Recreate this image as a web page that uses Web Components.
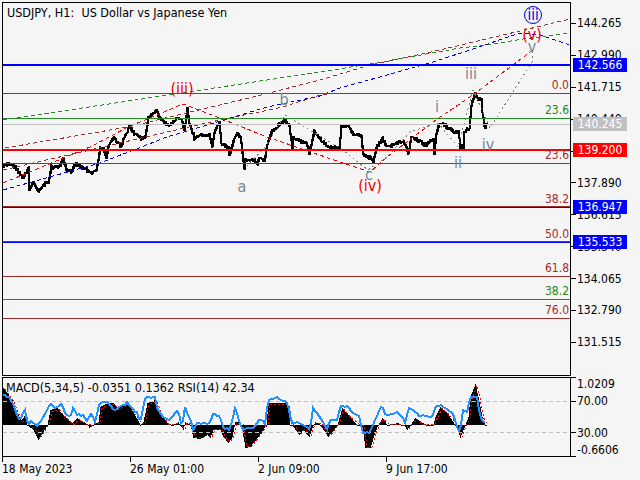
<!DOCTYPE html>
<html><head><meta charset="utf-8"><title>USDJPY</title>
<style>
html,body{margin:0;padding:0;background:#f5f5f5;overflow:hidden}
body{font:12px "DejaVu Sans Condensed","DejaVu Sans",sans-serif;color:#000}
</style></head><body>
<mt-chart>
  <price-pane slot="price" title-text="USDJPY, H1:  US Dollar vs Japanese Yen">
    <chart-label x="182" y="89" c="#f00000">(iii)</chart-label>
    <chart-label x="284" y="100" c="#778899">b</chart-label>
    <chart-label x="242" y="187" c="#778899">a</chart-label>
    <chart-label x="369" y="175" c="#778899">c</chart-label>
    <chart-label x="370" y="186" c="#f00000">(iv)</chart-label>
    <chart-label x="437" y="107" c="#778899">i</chart-label>
    <chart-label x="458" y="163" c="#778899">ii</chart-label>
    <chart-label x="471" y="74" c="#778899">iii</chart-label>
    <chart-label x="488" y="145" c="#778899">iv</chart-label>
    <chart-label x="532" y="35" c="#f00000">(v)</chart-label>
    <chart-label x="532" y="47" c="#778899">v</chart-label>
    <chart-label x="533" y="15" c="#0000e0" ring>iii</chart-label>
    <chart-label r="568" y="85" c="#a52a2a" fib>0.0</chart-label>
    <chart-label r="568" y="110" c="#228b22" fib>23.6</chart-label>
    <chart-label r="568" y="155" c="#a52a2a" fib>23.6</chart-label>
    <chart-label r="568" y="199" c="#a52a2a" fib>38.2</chart-label>
    <chart-label r="568" y="234" c="#a52a2a" fib>50.0</chart-label>
    <chart-label r="568" y="268" c="#a52a2a" fib>61.8</chart-label>
    <chart-label r="568" y="291" c="#228b22" fib>38.2</chart-label>
    <chart-label r="568" y="310" c="#a52a2a" fib>76.0</chart-label>
  </price-pane>
  <price-axis slot="price-axis">
    <axis-tick>144.265</axis-tick><axis-tick>142.990</axis-tick><axis-tick>141.715</axis-tick>
    <axis-tick>140.440</axis-tick><axis-tick>139.165</axis-tick><axis-tick>137.890</axis-tick>
    <axis-tick>136.615</axis-tick><axis-tick>135.340</axis-tick><axis-tick>134.065</axis-tick>
    <axis-tick>132.790</axis-tick><axis-tick>131.515</axis-tick>
    <price-tag slot="tags" y="58" bg="#0000ff">142.566</price-tag>
    <price-tag slot="tags" y="117" bg="#c0c0c0">140.245</price-tag>
    <price-tag slot="tags" y="143" bg="#ff0000">139.200</price-tag>
    <price-tag slot="tags" y="200" bg="#0000ff">136.947</price-tag>
    <price-tag slot="tags" y="235" bg="#0000ff">135.533</price-tag>
  </price-axis>
  <indicator-pane slot="indicator">MACD(5,34,5) -0.0351 0.1362 RSI(14) 42.34</indicator-pane>
  <indicator-axis slot="indicator-axis">
    <span style="height:14px;margin-top:0">1.0209</span>
    <span style="height:14px;margin-top:3px">70.00</span>
    <span style="height:14px;margin-top:18px">30.00</span>
    <span style="height:14px;margin-top:3px">-0.6606</span>
  </indicator-axis>
  <time-axis slot="time">
    <time-tick>18 May 2023</time-tick><time-tick>26 May 01:00</time-tick>
    <time-tick>2 Jun 09:00</time-tick><time-tick>9 Jun 17:00</time-tick>
  </time-axis>
</mt-chart>
<script>
const FONT='"DejaVu Sans Condensed","DejaVu Sans",sans-serif';
const PRICE=[[3,166],[8,163],[13,166],[18,172],[21,178],[25,173],[27,166],[27.5,193],[28,190],[32,182],[37,191],[42,185],[47,182],[50,167],[57,167],[62,160],[65,170],[70,172],[75,163],[80,167],[87,170],[90,173],[95,170],[99,148],[103,150],[105,157],[107,147],[112,138],[117,143],[120,147],[122,140],[128,127],[133,133],[140,138],[144,137],[147,117],[155,110],[158,117],[163,123],[168,125],[175,119],[180,118],[183,130],[186,108],[188,123],[193,138],[200,135],[208,135],[211,147],[213,133],[218,122],[220,143],[227,148],[228,155],[233,138],[236,132],[239,137],[241,152],[243,168],[244,160],[253,160],[256,165],[258,157],[263,162],[266,145],[270,132],[277,125],[283,120],[288,125],[291,148],[292,137],[300,142],[305,143],[308,152],[313,132],[320,140],[327,147],[337,148],[337.5,155],[340,126],[347,126],[353,135],[360,136],[362,155],[370,158],[372,161],[375,148],[381,138],[385,147],[390,146],[398,142],[403,143],[407,153],[410,137],[420,142],[423,145],[432,140],[433,155],[435,133],[438,123],[448,128],[453,132],[457,132],[459,147],[462,147],[463,132],[468,128],[470,105],[474,93],[477,100],[480,98],[481,113],[483,125],[484,127],[486,123]];
const DASH={
 green:[[3,120],[320,72],[370,64],[460,48],[487,45],[523,39],[570,33]],
 brown1:[[5,148],[128,127],[253,97],[320,80],[370,65],[427,53],[520,31],[570,19]],
 brown2:[[3,170],[103,147],[167,132],[220,120],[283,107],[320,95],[335,93]],
 blue:[[3,190],[100,163],[167,137],[267,107],[320,96],[340,88],[387,75],[433,62],[470,50],[520,33],[540,35],[570,45]],
 red:[[3,183],[90,147],[128,127],[183,104],[217,117],[267,137],[337,161],[370,172],[387,157],[433,122],[477,92],[533,50]],
 grey:[[243,170],[265,147],[285,115],[313,132],[340,148],[368,170],[387,157],[410,132],[438,123],[458,147],[473,90],[490,128],[532,62],[533,50]]
};
const RSI=[[3,395],[10,397],[15,410],[20,420],[25,410],[28,427],[30,420],[37,427],[45,413],[50,403],[55,408],[62,403],[65,413],[70,417],[73,408],[77,415],[83,415],[88,422],[90,412],[95,422],[100,402],[107,403],[115,410],[127,403],[137,413],[140,423],[145,398],[155,397],[157,407],[163,417],[170,420],[178,410],[182,427],[185,408],[192,423],[193,430],[197,423],[210,423],[213,413],[220,417],[223,427],[230,430],[235,408],[238,417],[242,430],[253,428],[260,420],[265,423],[268,400],[275,397],[287,402],[292,423],[300,423],[307,427],[310,430],[313,408],[320,417],[327,430],[330,420],[337,420],[340,407],[347,406],[353,413],[360,417],[362,433],[370,432],[375,420],[382,405],[385,415],[397,413],[403,417],[405,423],[409,408],[417,413],[420,417],[425,415],[432,417],[435,408],[440,405],[448,410],[453,413],[456,425],[460,432],[463,410],[467,412],[470,397],[477,397],[480,417],[485,423]];
const HIST=[[3,388],[7,393],[12,400],[17,413],[21,420],[25,415],[27,425],[33,430],[38,440],[43,432],[47,425],[50,410],[57,408],[63,415],[68,420],[72,423],[77,418],[85,423],[88,425],[89,428],[92,425],[98,422],[100,407],[107,403],[113,403],[117,408],[127,403],[133,412],[140,425],[143,422],[147,403],[155,400],[160,413],[167,423],[172,425],[178,422],[183,430],[185,422],[190,425],[193,438],[200,439],[207,435],[210,438],[213,430],[220,430],[223,437],[228,443],[232,437],[235,422],[238,422],[241,425],[245,448],[250,447],[257,438],[263,430],[266,425],[268,403],[287,403],[290,425],[293,427],[299,435],[303,430],[309,437],[313,425],[315,422],[320,425],[328,437],[335,428],[337,425],[342,408],[348,415],[357,425],[362,427],[365,448],[370,448],[375,432],[378,425],[382,418],[387,425],[398,423],[405,427],[407,430],[410,425],[415,418],[422,423],[427,425],[433,425],[435,417],[440,407],[447,413],[455,425],[460,438],[465,425],[468,417],[470,397],[475,384],[478,397],[482,417],[485,425]];
const pts=a=>a.map(p=>p.join(',')).join(' ');
function at(a,x){for(let i=1;i<a.length;i++){if(x<=a[i][0]){const[p,q]=[a[i-1],a[i]];const t=q[0]===p[0]?1:(x-p[0])/(q[0]-p[0]);return p[1]+(q[1]-p[1])*t}}return a[a.length-1][1]}
let seed=7;const rnd=()=>(seed=(seed*16807)%2147483647)/2147483647;

class MtChart extends HTMLElement{constructor(){super();this.attachShadow({mode:'open'}).innerHTML=`<style>
:host{display:grid;grid-template-columns:569px 69px;grid-template-rows:374px 81px 23px;padding:2px 0 0 2px;width:638px;height:478px;box-sizing:content-box;font:12px ${FONT}}
::slotted([slot=indicator]){margin-top:1px}
::slotted([slot=indicator-axis]){margin-top:1px}
</style>
<slot name="price"></slot><slot name="price-axis"></slot><slot name="indicator"></slot><slot name="indicator-axis"></slot><slot name="time"></slot>`}}

class PricePane extends HTMLElement{constructor(){super();
 const lines=[[64,'#0000ff',2],[93,'#a52a2a',1],[118,'#228b22',1],[124,'#c0c0c0',1],[149,'#ff0000',2],[163,'#a52a2a',1],[206,'#a52a2a',1],[207,'#0000ff',1],[241,'#a52a2a',1],[242,'#0000ff',1],[276,'#a52a2a',1],[299,'#228b22',1],[318,'#a52a2a',1]];
 let bars='',prev=at(PRICE,3);
 for(let x=3;x<=486;x++){const y=at(PRICE,x)+(rnd()*2.4-1.2);const a=.4+rnd()*1.4;const top=Math.min(prev,y)-a,h=Math.abs(prev-y)+2*a;bars+=`M${x} ${top.toFixed(1)}h2v${h.toFixed(1)}h-2z`;prev=y}
 const dl=(a,c,w='4 3')=>`<polyline points="${pts(a)}" fill="none" stroke="${c}" stroke-dasharray="${w}"/>`;
 this.attachShadow({mode:'open'}).innerHTML=`<style>
:host{display:block;position:relative;box-sizing:border-box;border:1px solid #000;overflow:hidden;height:374px;width:569px}
svg{position:absolute;left:0;top:0}
.t{position:relative;white-space:pre;padding:1px 0 0 4px;font-size:12.5px;line-height:17px}
</style>
<svg width="567" height="372" viewBox="3 3 567 372" shape-rendering="crispEdges">
<path d="${bars}" fill="#000"/>
${dl(DASH.grey,'#808080','2 3')}
${dl(DASH.green,'#228b22')}${dl(DASH.brown1,'#a52a2a')}${dl(DASH.brown2,'#a52a2a')}${dl(DASH.blue,'#0000ff')}${dl(DASH.red,'#ff0000')}
${lines.map(l=>`<rect x="3" y="${l[0]}" width="567" height="${l[2]}" fill="${l[1]}"/>`).join('')}
</svg>
<div class="t">${this.getAttribute('title-text')||''}</div><slot></slot>`}}

class ChartLabel extends HTMLElement{constructor(){super();this.attachShadow({mode:'open'}).innerHTML=`<style>
:host{position:absolute;display:block;white-space:nowrap;line-height:1;font-size:16px}
:host([fib]){font-size:12px}
:host([ring]){width:18px;height:18px;border:1px solid currentColor;border-radius:50%;box-sizing:border-box;text-align:center;line-height:16px;font-size:15px}
</style><slot></slot>`}
 connectedCallback(){const s=this.style,g=n=>this.getAttribute(n);s.color=g('c');s.top=(+g('y')-3)+'px';
  if(g('r')){s.right=(569-+g('r'))+'px';s.transform='translateY(-50%)'}else{s.left=(+g('x')-3)+'px';s.transform='translate(-50%,-50%)'}}}

class PriceAxis extends HTMLElement{constructor(){super();this.attachShadow({mode:'open'}).innerHTML=`<style>
:host{display:flex;flex-direction:column;position:relative;padding-top:5.5px;height:374px;box-sizing:border-box;overflow:visible;font-size:12px}
</style><slot></slot><slot name="tags"></slot>`}}

class AxisTick extends HTMLElement{constructor(){super();this.attachShadow({mode:'open'}).innerHTML=`<style>
:host{display:flex;align-items:center;gap:1px;height:31.9px;flex:none;line-height:16px}
i{display:block;width:5px;height:1px;background:#000;flex:none}
</style><i></i><slot></slot>`}}

class PriceTag extends HTMLElement{constructor(){super();this.attachShadow({mode:'open'}).innerHTML=`<style>
:host{position:absolute;left:2px;width:54px;height:14px;color:#fff;text-align:center;line-height:14px;font-size:12px}
</style><slot></slot>`}
 connectedCallback(){this.style.top=(+this.getAttribute('y')-2)+'px';this.style.background=this.getAttribute('bg')}}

class IndicatorPane extends HTMLElement{constructor(){super();
 let h='';
 for(let x=3;x<=486;x++){const y=Math.round(at(HIST,x));const t=Math.min(y,425),b=Math.max(y,425);h+=`M${x} ${t}h1v${Math.max(b-t,1)}h-1z`}
 const sig=HIST.map(p=>[p[0]+2,p[1]+(p[1]<425?1.5:-1)]);
 let rsi=[];for(let x=3;x<=485;x+=2)rsi.push([x,Math.round(at(RSI,x)+(rnd()*1.6-.8))]);
 this.attachShadow({mode:'open'}).innerHTML=`<style>
:host{display:block;position:relative;box-sizing:border-box;border:1px solid #000;height:80px;width:569px;overflow:hidden}
svg{position:absolute;left:0;top:0}
.t{position:relative;white-space:pre;padding:3px 0 0 3px;font-size:12.5px;line-height:14px}
</style>
<svg width="567" height="78" viewBox="3 378 567 78" shape-rendering="crispEdges">
<path d="${h}" fill="#000"/>
<line x1="3" x2="570" y1="401.5" y2="401.5" stroke="#c0c0c0" stroke-dasharray="4 3"/>
<line x1="3" x2="570" y1="432.5" y2="432.5" stroke="#c0c0c0" stroke-dasharray="4 3"/>
<polyline points="${pts(sig)}" fill="none" stroke="#ff0000" stroke-dasharray="2 2"/>
<polyline points="${pts(rsi)}" fill="none" stroke="#1e90ff" stroke-width="2"/>
</svg>
<div class="t"><slot></slot></div>`}}

class IndicatorAxis extends HTMLElement{constructor(){super();this.attachShadow({mode:'open'}).innerHTML=`<style>
:host{display:flex;flex-direction:column;height:80px;box-sizing:border-box;padding:0 0 0 6px;font-size:12px;line-height:14px;
background:
 linear-gradient(#000,#000) 0 0/5px 1px no-repeat,
 linear-gradient(#000,#000) 0 24px/5px 1px no-repeat,
 linear-gradient(#000,#000) 0 55px/5px 1px no-repeat,
 linear-gradient(#000,#000) 0 79px/5px 1px no-repeat}
</style><slot></slot>`}}

class TimeAxis extends HTMLElement{constructor(){super();this.attachShadow({mode:'open'}).innerHTML=`<style>
:host{display:flex;grid-column:1 / span 2;font-size:12px;line-height:14px}
</style><slot></slot>`}}

class TimeTick extends HTMLElement{constructor(){super();this.attachShadow({mode:'open'}).innerHTML=`<style>
:host{display:block;width:128px;flex:none;white-space:nowrap}
i{display:block;width:1px;height:5px;background:#000}
</style><i></i><slot></slot>`}}

for(const [n,c] of Object.entries({'mt-chart':MtChart,'price-pane':PricePane,'chart-label':ChartLabel,'price-axis':PriceAxis,'axis-tick':AxisTick,'price-tag':PriceTag,'indicator-pane':IndicatorPane,'indicator-axis':IndicatorAxis,'time-axis':TimeAxis,'time-tick':TimeTick}))customElements.define(n,c);
</script>
</body></html>
